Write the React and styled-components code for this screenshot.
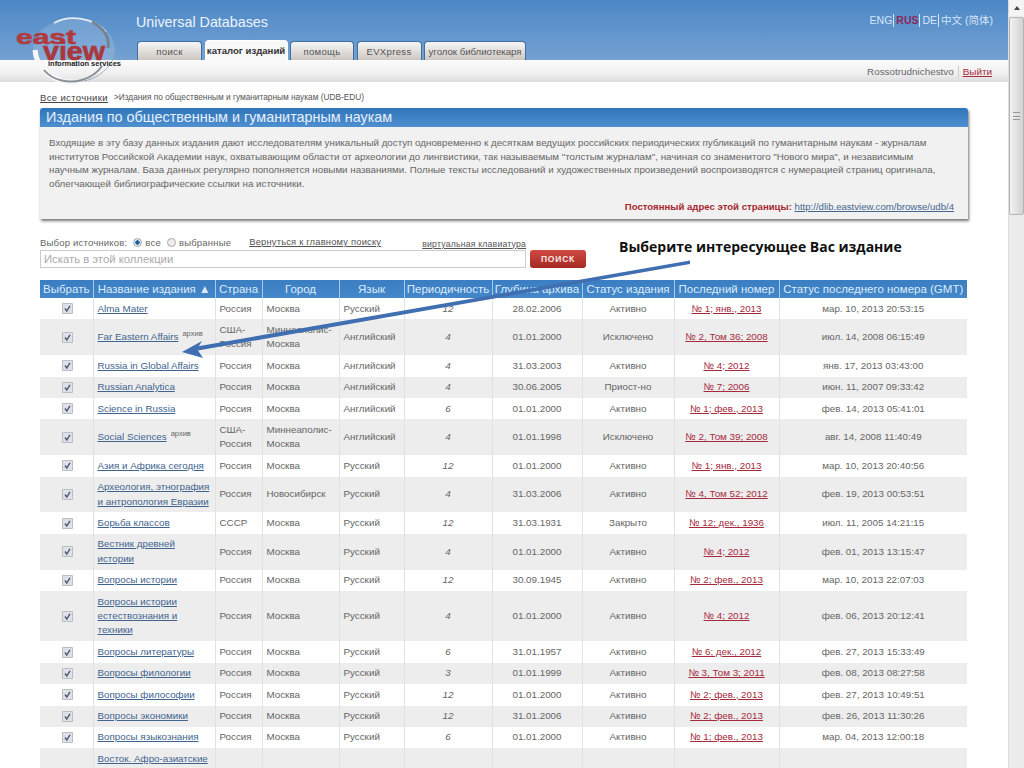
import React from "react";
import styled, { createGlobalStyle } from "styled-components";

const GlobalStyle = createGlobalStyle`
  html, body {
    margin: 0;
    padding: 0;
    height: 768px;
    overflow: hidden;
    background: #fff;
    font-family: "Liberation Sans", Arial, sans-serif;
  }
`;

const Page = styled.div`
  position: relative;
  display: flex;
  width: 1024px;
  height: 768px;
  overflow: hidden;
`;

const Main = styled.div`
  width: 1008px;
  flex: none;
`;

const Scrollbar = styled.div`
  width: 16px;
  flex: none;
  display: flex;
  flex-direction: column;
  background: #ececec;
  border-left: 1px solid #ddd;
  box-sizing: border-box;
`;

const ScrollUp = styled.div`
  height: 16px;
  display: flex;
  align-items: center;
  justify-content: center;
  background: #f4f4f4;
  &::before {
    content: "";
    border-left: 3px solid transparent;
    border-right: 3px solid transparent;
    border-bottom: 4px solid #444;
  }
`;

const ScrollThumb = styled.div`
  height: 198px;
  margin-top: 1px;
  display: flex;
  align-items: center;
  justify-content: center;
  background: linear-gradient(to right, #f2f2f2, #d2d2d2);
  border: 1px solid #b4b4b4;
  border-radius: 2px;
  box-sizing: border-box;
  &::before {
    content: "";
    width: 7px;
    height: 6px;
    border-top: 1px solid #999;
    border-bottom: 1px solid #999;
    background: linear-gradient(#999, #999) center / 100% 1px no-repeat;
  }
`;

const TopBar = styled.header`
  position: relative;
  height: 60px;
  background: linear-gradient(#4c88c6, #74a1d2);
  display: flex;
  justify-content: space-between;
  padding: 0 15px 0 136px;
`;

const Brand = styled.div`
  display: flex;
  flex-direction: column;
  justify-content: space-between;
`;

const Product = styled.div`
  margin-top: 14px;
  font-size: 14.3px;
  line-height: 17px;
  color: #eef4fb;
`;

const Tabs = styled.nav`
  display: flex;
  align-items: flex-end;
  gap: 2.5px;
  margin-left: 1px;
`;

const Tab = styled.a`
  width: ${(p) => p.$w}px;
  height: ${(p) => (p.$active ? 20 : 19)}px;
  display: flex;
  align-items: center;
  justify-content: center;
  box-sizing: border-box;
  white-space: nowrap;
  border: 1px solid ${(p) => (p.$active ? "#fff" : "#3f6f9f")};
  border-bottom: 0;
  border-radius: 4px 4px 0 0;
  background: ${(p) => (p.$active ? "#f8f8f8" : "linear-gradient(#f6f6f6, #cdc7c2)")};
  font-size: 9.6px;
  font-weight: ${(p) => (p.$active ? 700 : 400)};
  letter-spacing: ${(p) => (p.$active || p.$tight ? 0 : 0.3)}px;
  color: ${(p) => (p.$active ? "#333" : "#555")};
`;

const Langs = styled.div`
  margin-top: 14px;
  display: flex;
  gap: 1px;
  height: 13px;
  font-size: 10.5px;
  line-height: 13px;
  color: #d5e5f7;
  font-family: "Liberation Sans", "Noto Sans CJK SC", sans-serif;
`;

const Lang = styled.span`
  font-weight: ${(p) => (p.$active ? 700 : 400)};
  color: ${(p) => (p.$active ? "#8a2a5c" : "#d5e5f7")};
  padding-left: ${(p) => (p.$first ? 0 : 2)}px;
  border-left: ${(p) => (p.$first ? "0" : "1px solid #d5e5f7")};
`;

const SubBar = styled.div`
  height: 22px;
  display: flex;
  justify-content: flex-end;
  align-items: center;
  gap: 4px;
  padding-right: 16px;
  background: linear-gradient(#fbfbfb, #f0f0f0 60%, #dcdcdc);
  font-size: 9.9px;
  color: #666;
`;

const LogOut = styled.a`
  padding-left: 4px;
  border-left: 1px solid #ccc;
  color: #a52a3c;
  text-decoration: underline;
`;

const Logo = styled.svg`
  position: absolute;
  left: 0;
  top: 10px;
`;

const Content = styled.div`
  padding: 8px 40px 0 40px;
`;

const Crumbs = styled.div`
  height: 14px;
  margin-bottom: 4px;
  display: flex;
  align-items: center;
  gap: 6px;
  font-size: 8.3px;
  color: #555;
`;

const CrumbLink = styled.a`
  font-size: 9.5px;
  letter-spacing: 0.35px;
  color: #444;
  text-decoration: underline;
`;

const InfoPanel = styled.section`
  box-shadow: 1px 2px 3px rgba(0, 0, 0, 0.55);
  border-radius: 3px 3px 0 0;
`;

const InfoTitle = styled.h1`
  margin: 0;
  height: 19px;
  padding-left: 6px;
  font-size: 14.4px;
  font-weight: 400;
  line-height: 19px;
  color: #e6f0fb;
  border-radius: 3px 3px 0 0;
  background: linear-gradient(#2f75b9, #4f8fd0);
`;

const InfoBody = styled.div`
  height: 92px;
  box-sizing: border-box;
  padding: 9px 14px 0 9px;
  background: #f1f1f1;
  display: flex;
  flex-direction: column;
  justify-content: space-between;
`;

const InfoText = styled.p`
  margin: 0;
  font-size: 9.77px;
  line-height: 13.5px;
  color: #666;
  white-space: nowrap;
`;

const Permalink = styled.div`
  margin-bottom: 7px;
  text-align: right;
  font-size: 9.6px;
  font-weight: 700;
  color: #a5282f;
  a {
    font-weight: 400;
    color: #44668f;
    text-decoration: underline;
  }
`;

const SourceRow = styled.div`
  margin-top: 15px;
  height: 16px;
  display: flex;
  align-items: center;
  font-size: 9.5px;
  letter-spacing: 0.2px;
  color: #666;
`;

const Radio = styled.span`
  width: 9px;
  height: 9px;
  margin: 0 3px 0 6px;
  border-radius: 50%;
  box-sizing: border-box;
  border: 1px solid #aaa;
  background: ${(p) => (p.$on ? "radial-gradient(#1f5f97 40%, #dfe8f0 48%)" : "#eee")};
`;

const BackLink = styled.a`
  margin-left: ${(p) => p.$ml}px;
  margin-top: ${(p) => p.$mt}px;
  font-size: ${(p) => p.$size}px;
  color: #555;
  text-decoration: underline;
`;

const SearchRow = styled.div`
  display: flex;
  gap: 4px;
  height: 18px;
`;

const SearchBox = styled.div`
  width: 486px;
  box-sizing: border-box;
  padding-left: 3px;
  border: 1px solid #ccc;
  font-size: 11.3px;
  line-height: 16px;
  color: #aaa;
`;

const SearchButton = styled.button`
  width: 56px;
  padding: 0;
  border: 0;
  border-radius: 3px;
  background: linear-gradient(#cf4a42, #a52a24);
  font: 700 8.5px "Liberation Sans", sans-serif;
  letter-spacing: 0.8px;
  color: #f7e8e6;
`;

const Table = styled.table`
  margin-top: 12px;
  width: 927px;
  table-layout: fixed;
  border-collapse: collapse;
`;

const Th = styled.th`
  height: 18px;
  padding: 0;
  font-size: 11.5px;
  font-weight: 400;
  white-space: nowrap;
  color: #dcebfa;
  background: linear-gradient(#3a7dc2, #4487c9);
  border-right: 1px solid #a9c9e8;
  &:last-child {
    border-right: 0;
  }
`;

const Tr = styled.tr`
  height: ${(p) => p.$h || "auto"};
  background: ${(p) => (p.$odd ? "#fff" : "#ededed")};
`;

const Td = styled.td`
  padding: 3.5px 4px;
  font-size: 9.8px;
  line-height: 14.4px;
  color: #666;
  border-right: 1px solid #e2e2e2;
  text-align: ${(p) => (p.$center ? "center" : "left")};
  font-style: ${(p) => (p.$italic ? "italic" : "normal")};
  vertical-align: ${(p) => (p.$top ? "top" : "middle")};
  &:last-child {
    border-right: 0;
  }
`;

const TitleLink = styled.a`
  color: #41648f;
  text-decoration: underline;
`;

const IssueLink = styled.a`
  color: #a52a3c;
  text-decoration: underline;
`;

const ArchiveMark = styled.sup`
  margin-left: 4px;
  font-size: 7.5px;
  line-height: 0;
  color: #666;
`;

const Check = styled.svg`
  display: block;
  margin-left: 18px;
`;

const Callout = styled.div`
  position: absolute;
  left: 619px;
  top: 237px;
  font-family: "Open Sans", sans-serif;
  font-size: 14px;
  font-weight: 700;
  line-height: 20px;
  color: #111;
`;

const Arrow = styled.svg`
  position: absolute;
  left: 0;
  top: 0;
  pointer-events: none;
`;

const columns = [53, 122, 47, 77, 65, 88, 90, 92, 105, 188];
const heads = ["Выбрать", "Название издания ▲", "Страна", "Город", "Язык", "Периодичность", "Глубина архива", "Статус издания", "Последний номер", "Статус последнего номера (GMT)"];

const rows = [
  [["Alma Mater"], "Россия", "Москва", "Русский", "12", "28.02.2006", "Активно", "№ 1; янв., 2013", "мар. 10, 2013 20:53:15"],
  [["Far Eastern Affairs"], "США-Россия", "Миннеаполис-Москва", "Английский", "4", "01.01.2000", "Исключено", "№ 2, Том 36; 2008", "июл. 14, 2008 06:15:49", true],
  [["Russia in Global Affairs"], "Россия", "Москва", "Английский", "4", "31.03.2003", "Активно", "№ 4; 2012", "янв. 17, 2013 03:43:00"],
  [["Russian Analytica"], "Россия", "Москва", "Английский", "4", "30.06.2005", "Приост-но", "№ 7; 2006", "июн. 11, 2007 09:33:42"],
  [["Science in Russia"], "Россия", "Москва", "Английский", "6", "01.01.2000", "Активно", "№ 1; фев., 2013", "фев. 14, 2013 05:41:01"],
  [["Social Sciences"], "США-Россия", "Миннеаполис-Москва", "Английский", "4", "01.01.1998", "Исключено", "№ 2, Том 39; 2008", "авг. 14, 2008 11:40:49", true],
  [["Азия и Африка сегодня"], "Россия", "Москва", "Русский", "12", "01.01.2000", "Активно", "№ 1; янв., 2013", "мар. 10, 2013 20:40:56"],
  [["Археология, этнография", "и антропология Евразии"], "Россия", "Новосибирск", "Русский", "4", "31.03.2006", "Активно", "№ 4, Том 52; 2012", "фев. 19, 2013 00:53:51"],
  [["Борьба классов"], "СССР", "Москва", "Русский", "12", "31.03.1931", "Закрыто", "№ 12; дек., 1936", "июл. 11, 2005 14:21:15"],
  [["Вестник древней", "истории"], "Россия", "Москва", "Русский", "4", "01.01.2000", "Активно", "№ 4; 2012", "фев. 01, 2013 13:15:47"],
  [["Вопросы истории"], "Россия", "Москва", "Русский", "12", "30.09.1945", "Активно", "№ 2; фев., 2013", "мар. 10, 2013 22:07:03"],
  [["Вопросы истории", "естествознания и", "техники"], "Россия", "Москва", "Русский", "4", "01.01.2000", "Активно", "№ 4; 2012", "фев. 06, 2013 20:12:41"],
  [["Вопросы литературы"], "Россия", "Москва", "Русский", "6", "31.01.1957", "Активно", "№ 6; дек., 2012", "фев. 27, 2013 15:33:49"],
  [["Вопросы филологии"], "Россия", "Москва", "Русский", "3", "01.01.1999", "Активно", "№ 3, Том 3; 2011", "фев. 08, 2013 08:27:58"],
  [["Вопросы философии"], "Россия", "Москва", "Русский", "12", "01.01.2000", "Активно", "№ 2; фев., 2013", "фев. 27, 2013 10:49:51"],
  [["Вопросы экономики"], "Россия", "Москва", "Русский", "12", "31.01.2006", "Активно", "№ 2; фев., 2013", "фев. 26, 2013 11:30:26"],
  [["Вопросы языкознания"], "Россия", "Москва", "Русский", "6", "01.01.2000", "Активно", "№ 1; фев., 2013", "мар. 04, 2013 12:00:18"],
];

const CheckBox = () => (
  <Check width="11" height="11" viewBox="0 0 11 11">
    <rect x="0" y="0" width="11" height="11" rx="1" fill="#b9bdc6" />
    <rect x="1" y="1" width="9" height="9" fill="#dfe1e6" />
    <path d="M3 5.5 L4.8 8 L8 2.8" fill="none" stroke="#4a5a70" strokeWidth="1.4" />
  </Check>
);

const EastViewLogo = () => (
  <Logo width="130" height="80" viewBox="0 10 130 80">
    <ellipse cx="74" cy="50" rx="41" ry="32" fill="#ffffff" opacity="0.14" />
    <path d="M54 23 C70 14 94 18 106 32" fill="none" stroke="#e4ebf3" strokeWidth="1.8" />
    <path d="M92 22 C104 28 110 38 108 48" fill="none" stroke="#77848f" strokeWidth="3" />
    <path d="M115 50 C115 64 100 78 84 81" fill="none" stroke="#8aa0b8" strokeWidth="0.8" />
    <path d="M35 50 C36 68 54 84 78 82" fill="none" stroke="#f8f8f8" strokeWidth="5" />
    <path d="M44 70 C52 80 68 84 82 80 C92 77 98 72 102 66" fill="none" stroke="#8b9097" strokeWidth="2" />
    <text x="16" y="44" textLength="60" lengthAdjust="spacingAndGlyphs" fontFamily="Liberation Sans" fontWeight="700" fontSize="21" fill="#b13a3e" stroke="#b13a3e" strokeWidth="0.6">east</text>
    <text x="43" y="60" textLength="62" lengthAdjust="spacingAndGlyphs" fontFamily="Liberation Sans" fontWeight="700" fontSize="25" fill="#a8383c" stroke="#a8383c" strokeWidth="0.6">view</text>
    <text x="48" y="66" textLength="73" lengthAdjust="spacingAndGlyphs" fontFamily="Liberation Sans" fontWeight="700" fontSize="7.5" fill="#222">information services</text>
  </Logo>
);

const App = () => {
  return (
    <Page>
      <GlobalStyle />
      <Main>
        <TopBar>
          <Brand>
            <Product>Universal Databases</Product>
            <Tabs>
              <Tab $w={65}>поиск</Tab>
              <Tab $w={83} $active>каталог изданий</Tab>
              <Tab $w={64}>помощь</Tab>
              <Tab $w={65}>EVXpress</Tab>
              <Tab $w={102} $tight>уголок библиотекаря</Tab>
            </Tabs>
          </Brand>
          <Langs>
            <Lang $first>ENG</Lang>
            <Lang $active>RUS</Lang>
            <Lang>DE</Lang>
            <Lang>中文 (简体)</Lang>
          </Langs>
        </TopBar>
        <SubBar>
          Rossotrudnichestvo <LogOut>Выйти</LogOut>
        </SubBar>
        <EastViewLogo />
        <Content>
          <Crumbs>
            <CrumbLink>Все источники</CrumbLink>
            <span>&gt;Издания по общественным и гуманитарным наукам (UDB-EDU)</span>
          </Crumbs>
          <InfoPanel>
            <InfoTitle>Издания по общественным и гуманитарным наукам</InfoTitle>
            <InfoBody>
              <InfoText>
                Входящие в эту базу данных издания дают исследователям уникальный доступ одновременно к десяткам ведущих российских периодических публикаций по гуманитарным наукам - журналам<br />
                институтов Российской Академии наук, охватывающим области от археологии до лингвистики, так называемым "толстым журналам", начиная со знаменитого "Нового мира", и независимым<br />
                научным журналам. База данных регулярно пополняется новыми названиями. Полные тексты исследований и художественных произведений воспроизводятся с нумерацией страниц оригинала,<br />
                облегчающей библиографические ссылки на источники.
              </InfoText>
              <Permalink>
                Постоянный адрес этой страницы: <a>http://dlib.eastview.com/browse/udb/4</a>
              </Permalink>
            </InfoBody>
          </InfoPanel>
          <SourceRow>
            Выбор источников:
            <Radio $on />все
            <Radio />выбранные
            <BackLink $ml={18} $mt={0} $size={9.35}>Вернуться к главному поиску</BackLink>
            <BackLink $ml={41} $mt={3} $size={8.7}>виртуальная клавиатура</BackLink>
          </SourceRow>
          <SearchRow>
            <SearchBox>Искать в этой коллекции</SearchBox>
            <SearchButton>ПОИСК</SearchButton>
          </SearchRow>
          <Table>
            <colgroup>
              {columns.map((w, i) => (
                <col key={i} width={w} />
              ))}
            </colgroup>
            <thead>
              <tr>
                {heads.map((h) => (
                  <Th key={h}>{h}</Th>
                ))}
              </tr>
            </thead>
            <tbody>
              {rows.map((r, i) => (
                <Tr key={i} $odd={i % 2 === 0}>
                  <Td><CheckBox /></Td>
                  <Td>
                    {r[0].map((line, j) => (
                      <React.Fragment key={j}>
                        {j > 0 && <br />}
                        <TitleLink>{line}</TitleLink>
                      </React.Fragment>
                    ))}
                    {r[9] && <ArchiveMark>архив</ArchiveMark>}
                  </Td>
                  <Td>{r[1]}</Td>
                  <Td>{r[2]}</Td>
                  <Td>{r[3]}</Td>
                  <Td $center $italic>{r[4]}</Td>
                  <Td $center>{r[5]}</Td>
                  <Td $center>{r[6]}</Td>
                  <Td $center><IssueLink>{r[7]}</IssueLink></Td>
                  <Td $center>{r[8]}</Td>
                </Tr>
              ))}
              <Tr $h="50px">
                <Td><CheckBox /></Td>
                <Td $top><TitleLink>Восток. Афро-азиатские</TitleLink></Td>
                <Td />
                <Td />
                <Td />
                <Td />
                <Td />
                <Td />
                <Td />
                <Td />
              </Tr>
            </tbody>
          </Table>
        </Content>
      </Main>
      <Scrollbar>
        <ScrollUp />
        <ScrollThumb />
      </Scrollbar>
      <Callout>Выберите интересующее Вас издание</Callout>
      <Arrow width="1024" height="768" viewBox="0 0 1024 768">
        <path d="M690 260.5 L690 264 L195 351 L194 347 Z" fill="#3f6fb0" />
        <path d="M182 352 L202 341 L197 349 L203 358 Z" fill="#3f6fb0" />
      </Arrow>
    </Page>
  );
};

export default App;
